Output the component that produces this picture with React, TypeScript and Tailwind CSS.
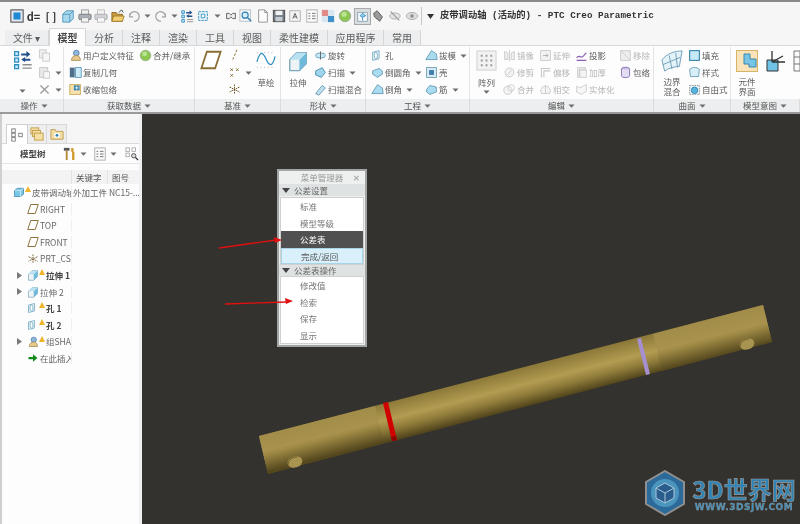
import React from "react";

const cjk = "font-['Noto_Sans_CJK_SC','Noto_Sans',sans-serif]";

const tabs = [
  { label: "文件 ▾", w: "w-[44px]" },
  { label: "模型", w: "w-[37px]", active: true },
  { label: "分析", w: "w-[37px]" },
  { label: "注释", w: "w-[37px]" },
  { label: "渲染", w: "w-[37px]" },
  { label: "工具", w: "w-[37px]" },
  { label: "视图", w: "w-[37px]" },
  { label: "柔性建模", w: "w-[57px]" },
  { label: "应用程序", w: "w-[56px]" },
  { label: "常用", w: "w-[37px]" },
];

const footers = [
  { label: "操作", w: "w-[59px]" },
  { label: "获取数据", w: "w-[131px]" },
  { label: "基准", w: "w-[86px]" },
  { label: "形状", w: "w-[85px]" },
  { label: "工程", w: "w-[104px]" },
  { label: "编辑", w: "w-[184px]" },
  { label: "曲面", w: "w-[77px]" },
  { label: "模型意图", w: "flex-1" },
];

function Caret({ className = "" }: { className?: string }) {
  return (
    <svg width="7" height="4" viewBox="0 0 7 4" className={`shrink-0 ${className}`}>
      <path d="M0.5 0.5h6L3.5 3.8z" fill="#6d6d6d" />
    </svg>
  );
}

// one generic drawing per kind of small icon in the toolbar and ribbon
function Icon({ kind, size = 15 }: { kind: string; size?: number }) {
  const draw: Record<string, React.ReactNode> = {
    window: (
      <>
        <rect x="1" y="1" width="14" height="14" fill="#dfe8f0" stroke="#333" />
        <rect x="4" y="4" width="8" height="8" fill="#1e88d2" />
      </>
    ),
    cube: (
      <>
        <path d="M2 6l4-4h8v9l-4 4H2z" fill="#a8d8ec" stroke="#4d93b8" />
        <path d="M2 6h8v9M10 6l4-4" fill="none" stroke="#4d93b8" />
      </>
    ),
    printer: (
      <>
        <rect x="4" y="1" width="8" height="6" fill="#eee" stroke="#999" />
        <rect x="1" y="6" width="14" height="6" rx="1" fill="#a9b0b8" stroke="#777" />
        <rect x="4" y="10" width="8" height="5" fill="#f3f3f3" stroke="#999" />
      </>
    ),
    printerOff: (
      <>
        <rect x="4" y="1" width="8" height="6" fill="#f3f3f3" stroke="#bbb" />
        <rect x="1" y="6" width="14" height="6" rx="1" fill="#cfd2d6" stroke="#aaa" />
        <rect x="4" y="10" width="8" height="5" fill="#f8f8f8" stroke="#bbb" />
      </>
    ),
    folder: (
      <>
        <path d="M1 4h5l1 2h6v8H1z" fill="#c89a3c" stroke="#8a6a22" />
        <path d="M3 8h12l-2 6H1z" fill="#f2cf74" stroke="#a07c2c" />
        <path d="M9 4l3-3 2 3" fill="none" stroke="#333" />
      </>
    ),
    undo: <path d="M3 9a5.5 5.5 0 1 1 5 5M3 5v4h4" fill="none" stroke="#a3a3a3" strokeWidth="1.4" />,
    redo: <path d="M13 9a5.5 5.5 0 1 0-5 5M13 5v4H9" fill="none" stroke="#a3a3a3" strokeWidth="1.4" />,
    regen: (
      <>
        <path d="M2 2h3v3H2zM2 7h3v3H2zM2 12h3v3H2z" fill="#c8e8f6" stroke="#2f8fc0" />
        <path d="M7 3.5h4V1.5l3 2.5-3 2.5V5H7zM14 7.5h-4V6L7 8l3 2V9h4z" fill="#24508a" />
        <path d="M8 12h7M8 14.5h7" stroke="#8c8c8c" />
      </>
    ),
    select: (
      <>
        <path d="M3 3h10v10H3z" fill="#e6f4fa" stroke="#2f8fc0" strokeDasharray="3 1" />
        <path d="M6 6h4v4H6z" fill="#fff" stroke="#2f8fc0" />
      </>
    ),
    xx: <path d="M3 5h3l2 2 2-2h3v6h-3l-2-2-2 2H3z" fill="#eee" stroke="#555" />,
    zoom: (
      <>
        <rect x="1" y="1" width="12" height="13" fill="#f4f8fb" stroke="#b5bcc2" />
        <circle cx="7" cy="7" r="3.5" fill="#d6eefa" stroke="#2f7fb0" strokeWidth="1.3" />
        <path d="M10 10l4 4" stroke="#2f7fb0" strokeWidth="1.6" />
      </>
    ),
    page: <path d="M3 1h7l3 3v11H3zM10 1v3h3" fill="#fbfbfb" stroke="#8d8d8d" />,
    save: (
      <>
        <rect x="1.5" y="1.5" width="13" height="13" fill="#6f7a84" stroke="#444" />
        <rect x="4" y="2" width="8" height="5" fill="#f1f1f1" />
        <rect x="4" y="9" width="8" height="5" fill="#c4ccd2" />
      </>
    ),
    note: (
      <>
        <rect x="2" y="2" width="12" height="12" fill="#f3f3f3" stroke="#aaa" />
        <path d="M5.5 11L8 5l2.5 6M6.5 9h3" fill="none" stroke="#555" />
      </>
    ),
    list: (
      <>
        <rect x="2" y="1" width="12" height="14" fill="#fafafa" stroke="#aaa" />
        <path d="M4 5h2M8 5h4M4 8h2M8 8h4M4 11h2M8 11h4" stroke="#666" />
      </>
    ),
    color: (
      <>
        <rect x="1" y="1" width="7" height="7" fill="#e08a8a" />
        <rect x="8" y="1" width="7" height="7" fill="#d9e6ef" />
        <rect x="1" y="8" width="7" height="7" fill="#d9e6ef" />
        <rect x="8" y="8" width="7" height="7" fill="#3f8fc9" />
      </>
    ),
    ball: (
      <>
        <circle cx="8" cy="8" r="6.5" fill="#8cc850" stroke="#9aa690" />
        <circle cx="7" cy="6" r="3" fill="#b9e490" />
      </>
    ),
    view: (
      <>
        <path d="M2 3h12v11H2z" fill="#f2f9fd" stroke="#8b9aa5" />
        <path d="M8 4l4 3-4 2-3-2zM8 9v4" fill="#8fd0ec" stroke="#2f7fb0" />
      </>
    ),
    tool: <path d="M3 5l4-3 6 7-3 5-6-5z" fill="#9a9a9a" stroke="#555" />,
    eyeOff: (
      <>
        <ellipse cx="8" cy="8" rx="6" ry="3.5" fill="#e6e6e6" stroke="#aaa" />
        <path d="M3 3l10 10" stroke="#999" strokeWidth="1.4" />
      </>
    ),
    eye: (
      <>
        <ellipse cx="8" cy="8" rx="6.5" ry="4" fill="#dedede" stroke="#aaa" />
        <circle cx="8" cy="8" r="2" fill="#8a8a8a" />
      </>
    ),
    copy: (
      <>
        <rect x="2" y="1" width="8" height="10" fill="#eee" stroke="#c4c4c4" />
        <rect x="6" y="5" width="8" height="10" fill="#f6f6f6" stroke="#c4c4c4" />
      </>
    ),
    paste: (
      <>
        <rect x="2" y="2" width="10" height="12" fill="#e8e8e8" stroke="#c4c4c4" />
        <rect x="7" y="7" width="7" height="8" fill="#f8f8f8" stroke="#c4c4c4" />
      </>
    ),
    cross: <path d="M3 3l10 10M13 3L3 13" stroke="#9a9a9a" strokeWidth="1.6" />,
    udf: (
      <>
        <circle cx="9" cy="5" r="3.5" fill="#8fb9e0" stroke="#4b78a8" />
        <path d="M3 14c0-4 3-6 6-6s5 2 5 6z" fill="#e6c98c" stroke="#a88a4c" />
      </>
    ),
    geom: (
      <>
        <rect x="1" y="2" width="6" height="12" fill="#4f6f8a" />
        <rect x="8" y="2" width="7" height="12" fill="#cdeaf6" stroke="#4d93b8" />
      </>
    ),
    wrap: (
      <>
        <rect x="1" y="2" width="13" height="12" fill="#f7e2ae" stroke="#c7a24c" />
        <rect x="6" y="3" width="7" height="6" fill="#2f7fb0" />
        <path d="M7 6h5M9.5 4v4" stroke="#fff" />
      </>
    ),
    plane: <path d="M5 2h10l-4 12H1z" fill="#fff" stroke="#8a6f35" strokeWidth="1.3" />,
    axis: <path d="M11 1L5 15" stroke="#8a6f35" strokeWidth="1.2" strokeDasharray="3 2" />,
    points: <path d="M3 3l3 3M6 3l-3 3M10 3l3 3M13 3l-3 3M3 10l3 3M6 10l-3 3" stroke="#8a6f35" strokeWidth="1.2" />,
    csys: <path d="M8 2v12M2 5l12 6M14 5L2 11" stroke="#6b5220" strokeWidth="1.2" strokeDasharray="2 1" />,
    revolve: (
      <>
        <ellipse cx="8" cy="8" rx="6" ry="3" fill="#c9e8f5" stroke="#4d93b8" />
        <path d="M8 3v10" stroke="#555" />
      </>
    ),
    sweep: <path d="M2 6l8-4 4 6-5 6-7-3z" fill="#9fd4ea" stroke="#3b86ab" />,
    blend: <path d="M2 13L10 3l4 3-8 9z" fill="#bfdfee" stroke="#5b93ad" />,
    hole: (
      <>
        <path d="M2 4l8-2v10l-8 2z" fill="#e8f5fa" stroke="#6ba3be" />
        <ellipse cx="6" cy="8" rx="2" ry="4" fill="#fff" stroke="#6ba3be" />
      </>
    ),
    round: <path d="M2 6l8-3 4 3v4l-6 4-6-4z" fill="#a9dcf0" stroke="#5b93ad" />,
    draft: <path d="M1 13L8 2l6 4 1 7z" fill="#a9dcf0" stroke="#5b93ad" />,
    shell: (
      <>
        <rect x="2" y="2" width="12" height="12" fill="#dcecf5" stroke="#5b93ad" />
        <rect x="5" y="5" width="6" height="6" fill="#3f7fae" />
      </>
    ),
    rib: <path d="M2 8l4-5 8 2v6l-8 3-4-3z" fill="#a9dcf0" stroke="#5b93ad" />,
    mirror: <path d="M8 1v14M2 3l4 2v8H2zM14 3l-4 2v8h4z" fill="#eee" stroke="#c6c6c6" />,
    extend: (
      <>
        <rect x="2" y="2" width="12" height="12" fill="#f2f2f2" stroke="#c6c6c6" />
        <path d="M5 8h6M9 6l2 2-2 2" fill="none" stroke="#a5a5a5" />
      </>
    ),
    project: <path d="M2 11c3-5 5 1 8-2s3-4 4-4M2 14h12" fill="none" stroke="#8d5fb5" strokeWidth="1.4" />,
    remove: <path d="M2 2h12v12H2zM2 2l12 12" fill="#ededed" stroke="#c6c6c6" />,
    trim: (
      <>
        <circle cx="8" cy="8" r="5.5" fill="#f2f2f2" stroke="#c6c6c6" />
        <path d="M3 13L13 3" stroke="#c6c6c6" />
      </>
    ),
    offset: <path d="M3 14V3h11M6 14V6h8" fill="none" stroke="#c6c6c6" strokeWidth="1.3" />,
    thicken: <path d="M3 2h10v2H5v10H3zM6 5h8v9H6z" fill="#f4f4f4" stroke="#c6c6c6" />,
    wrapcyl: (
      <>
        <ellipse cx="8" cy="4" rx="5" ry="2.5" fill="#c4b4e0" stroke="#7a62a8" />
        <path d="M3 4v8c0 3 10 3 10 0V4" fill="#e4dcf2" stroke="#7a62a8" />
      </>
    ),
    merge: (
      <>
        <circle cx="6" cy="9" r="5" fill="#f4f4f4" stroke="#c6c6c6" />
        <circle cx="10" cy="6" r="4" fill="none" stroke="#c6c6c6" />
      </>
    ),
    intersect: <path d="M3 13a6 6 0 1 1 10 0zM8 3v10" fill="#f4f4f4" stroke="#c6c6c6" />,
    solidify: <path d="M2 4l4 2 8-4v8l-6 4-6-3z" fill="#f7f7f7" stroke="#c6c6c6" />,
    fill: <rect x="2" y="2" width="12" height="12" fill="#c6e9f7" stroke="#3b86ab" strokeWidth="1.4" />,
    style: <path d="M2 4c4-3 8-3 12 0l-1 9H3z" fill="#d8eef8" stroke="#5b93ad" />,
    free: (
      <>
        <rect x="2" y="3" width="12" height="11" fill="#eaf6fb" stroke="#888" strokeDasharray="2 1" />
        <circle cx="8" cy="9" r="4" fill="#58b4dc" stroke="#2f7fb0" />
      </>
    ),
    hammer: (
      <>
        <path d="M2 2h6v3H2z" fill="#555" />
        <path d="M4 5h2v10H4z" fill="#b98a3c" />
        <path d="M11 2v4M12 6v9" stroke="#d29a2c" strokeWidth="2.5" />
      </>
    ),
    tree: (
      <>
        <rect x="2" y="1" width="4" height="4" fill="#fff" stroke="#777" />
        <rect x="2" y="6" width="4" height="4" fill="#fff" stroke="#777" />
        <rect x="2" y="11" width="4" height="4" fill="#fff" stroke="#777" />
        <rect x="10" y="6" width="4" height="4" fill="#fff" stroke="#777" />
      </>
    ),
    treeFind: (
      <>
        <rect x="1" y="1" width="4" height="4" fill="#fff" stroke="#aaa" />
        <rect x="8" y="1" width="4" height="4" fill="#fff" stroke="#aaa" />
        <rect x="1" y="7" width="4" height="4" fill="#fff" stroke="#aaa" />
        <circle cx="10" cy="10" r="2.5" fill="#ddd" stroke="#444" />
        <path d="M12 12l3 3" stroke="#333" strokeWidth="1.5" />
      </>
    ),
    layers: (
      <>
        <rect x="1" y="1" width="9" height="7" fill="#f5dfa4" stroke="#c09a44" />
        <rect x="3" y="4" width="9" height="7" fill="#f5dfa4" stroke="#c09a44" />
        <rect x="5" y="7" width="10" height="8" fill="#f5dfa4" stroke="#c09a44" />
      </>
    ),
    folderTab: (
      <>
        <path d="M1 3h5l1 2h8v9H1z" fill="#f1dca2" stroke="#bc9a4c" />
        <rect x="5" y="7" width="6" height="5" fill="#fff" />
        <circle cx="8" cy="9.5" r="1.6" fill="#2f7fb0" />
      </>
    ),
    part: (
      <>
        <path d="M2 6l4-3h8v8l-4 3H2z" fill="#7cc7e8" stroke="#3b86ab" />
        <path d="M2 6h8v8M10 6l4-3" fill="none" stroke="#d8f0fa" />
      </>
    ),
    extrude: (
      <>
        <path d="M2 7l5-5h7v8l-5 5H2z" fill="#eef3f5" stroke="#7ea9bc" />
        <path d="M9 7l5-5v8l-5 5z" fill="#6fb9da" />
        <path d="M2 7l5-5h7l-5 5z" fill="#b9e1f1" />
      </>
    ),
    insert: <path d="M2 6.5h6V3l6 5-6 5V9.5H2z" fill="#128a1e" />,
  };
  return (
    <svg width={size} height={size} viewBox="0 0 16 16" className="shrink-0">
      {draw[kind]}
    </svg>
  );
}

const toolbar = [
  { kind: "window", w: "w-[16px]" }, { kind: "text:d=", w: "w-[17px]" }, { kind: "text:[ ]", w: "w-[18px]" },
  { kind: "cube", w: "w-[16px]" }, { kind: "printer", w: "w-[17px]" }, { kind: "printerOff", w: "w-[16px]" },
  { kind: "folder", w: "w-[17px]" }, { kind: "undo", w: "w-[16px]" }, { kind: "caret", w: "w-[10px]" },
  { kind: "redo", w: "w-[17px]" }, { kind: "caret", w: "w-[10px]" }, { kind: "regen", w: "w-[16px]" },
  { kind: "select", w: "w-[16px]" }, { kind: "caret", w: "w-[12px]" }, { kind: "xx", w: "w-[15px]" },
  { kind: "zoom", w: "w-[16px]" }, { kind: "page", w: "w-[17px]" }, { kind: "save", w: "w-[16px]" },
  { kind: "note", w: "w-[16px]" }, { kind: "list", w: "w-[17px]" }, { kind: "color", w: "w-[15px]" },
  { kind: "ball", w: "w-[20px]" }, { kind: "view", w: "w-[14px]" }, { kind: "tool", w: "w-[17px]" },
  { kind: "eyeOff", w: "w-[17px]" }, { kind: "eye", w: "w-[17px]" },
];

function RibbonItem({
  icon,
  label,
  off,
  caret,
}: {
  icon: string;
  label?: string;
  off?: boolean;
  caret?: boolean;
}) {
  return (
    <div className="flex h-[17px] items-center gap-[1px]">
      <Icon kind={icon} size={13} />
      {label && (
        <span className={`whitespace-nowrap text-[8.5px] leading-none ${off ? "text-[#b6b6b6]" : "text-[#5c5c5c]"}`}>
          {label}
        </span>
      )}
      {caret && <Caret className="ml-[3px]" />}
    </div>
  );
}

function Stack({ children, w, ml = "" }: { children: React.ReactNode; w: string; ml?: string }) {
  return <div className={`flex shrink-0 flex-col justify-start ${w} ${ml}`}>{children}</div>;
}

function Ribbon() {
  return (
    <div className="flex h-[53px] shrink-0 bg-[#fdfdfd] pt-[1px]">
      {/* 操作 */}
      <div className="flex w-[64px] shrink-0 border-r border-[#e2e4e6] pl-[12px]">
        <div className="flex w-[26px] flex-col">
          <div className="mt-[2px]">
            <Icon kind="regen" size={21} />
          </div>
          <Caret className="ml-[7px] mt-[19px]" />
        </div>
        <Stack w="w-[24px]">
          <RibbonItem icon="copy" />
          <RibbonItem icon="paste" caret />
          <RibbonItem icon="cross" caret />
        </Stack>
      </div>
      {/* 获取数据 */}
      <div className="flex w-[131px] shrink-0 border-r border-[#e2e4e6] pl-[5px]">
        <Stack w="w-[125px]">
          <div className="flex gap-[5px]">
            <RibbonItem icon="udf" label="用户定义特征" />
            <RibbonItem icon="ball" label="合并/继承" />
          </div>
          <RibbonItem icon="geom" label="复制几何" />
          <RibbonItem icon="wrap" label="收缩包络" />
        </Stack>
      </div>
      {/* 基准 */}
      <div className="flex w-[86px] shrink-0 border-r border-[#e2e4e6] pl-[5px]">
        <div className="mt-[2px] w-[28px] shrink-0">
          <Icon kind="plane" size={22} />
        </div>
        <Stack w="w-[28px]">
          <RibbonItem icon="axis" />
          <RibbonItem icon="points" caret />
          <RibbonItem icon="csys" />
        </Stack>
        <div className="flex w-[20px] shrink-0 flex-col items-center">
          <svg width="20" height="20" viewBox="0 0 22 20" className="mt-[3px] shrink-0">
            <path d="M1 12c4-14 7-10 10-3s7 10 10-3" fill="none" stroke="#2f8fc0" strokeWidth="1.4" />
            <path d="M1 2h20M1 18h20" stroke="#aaa" strokeDasharray="1 3" />
          </svg>
          <span className="mt-[8px] whitespace-nowrap text-[8.5px] leading-none text-[#5c5c5c]">草绘</span>
        </div>
      </div>
      {/* 形状 */}
      <div className="flex w-[85px] shrink-0 border-r border-[#e2e4e6] pl-[6px]">
        <div className="flex w-[22px] shrink-0 flex-col items-center">
          <div className="mt-[3px]">
            <Icon kind="extrude" size={22} />
          </div>
          <span className="mt-[6px] whitespace-nowrap text-[8.5px] leading-none text-[#5c5c5c]">拉伸</span>
        </div>
        <Stack w="w-[50px]" ml="ml-[5px]">
          <RibbonItem icon="revolve" label="旋转" />
          <RibbonItem icon="sweep" label="扫描" caret />
          <RibbonItem icon="blend" label="扫描混合" />
        </Stack>
      </div>
      {/* 工程 */}
      <div className="flex w-[104px] shrink-0 border-r border-[#e2e4e6] pl-[5px]">
        <Stack w="w-[54px]">
          <RibbonItem icon="hole" label="孔" />
          <RibbonItem icon="round" label="倒圆角" caret />
          <RibbonItem icon="draft" label="倒角" caret />
        </Stack>
        <Stack w="w-[44px]">
          <RibbonItem icon="draft" label="拔模" caret />
          <RibbonItem icon="shell" label="壳" />
          <RibbonItem icon="rib" label="筋" caret />
        </Stack>
      </div>
      {/* 编辑 */}
      <div className="flex w-[184px] shrink-0 border-r border-[#e2e4e6] pl-[6px]">
        <div className="flex w-[21px] shrink-0 flex-col items-center">
          <svg width="21" height="21" viewBox="0 0 22 22" className="mt-[3px] shrink-0">
            <rect x="1" y="1" width="20" height="20" fill="#f2f2f2" stroke="#cfcfcf" />
            <path d="M5 6h2M10 6h2M15 6h2M5 11h2M10 11h2M15 11h2M5 16h2M10 16h2M15 16h2" stroke="#9a9a9a" strokeWidth="2" />
          </svg>
          <span className="mt-[7px] whitespace-nowrap text-[8.5px] leading-none text-[#5c5c5c]">阵列</span>
          <Caret className="mt-[3px]" />
        </div>
        <Stack w="w-[36px]" ml="ml-[6px]">
          <RibbonItem icon="mirror" label="镜像" off />
          <RibbonItem icon="trim" label="修剪" off />
          <RibbonItem icon="merge" label="合并" off />
        </Stack>
        <Stack w="w-[36px]">
          <RibbonItem icon="extend" label="延伸" off />
          <RibbonItem icon="offset" label="偏移" off />
          <RibbonItem icon="intersect" label="相交" off />
        </Stack>
        <Stack w="w-[44px]">
          <RibbonItem icon="project" label="投影" />
          <RibbonItem icon="thicken" label="加厚" off />
          <RibbonItem icon="solidify" label="实体化" off />
        </Stack>
        <Stack w="w-[30px]">
          <RibbonItem icon="remove" label="移除" off />
          <RibbonItem icon="wrapcyl" label="包络" />
        </Stack>
      </div>
      {/* 曲面 */}
      <div className="flex w-[77px] shrink-0 border-r border-[#e2e4e6] pl-[6px]">
        <div className="flex w-[24px] shrink-0 flex-col items-center">
          <svg width="22" height="24" viewBox="0 0 24 24" className="mt-[2px] shrink-0">
            <path d="M1 11C6 4 15 1 23 1l-3 17c-6 0-12 2-16 5z" fill="#e4f3fa" stroke="#6b9db5" />
            <path d="M9 6l3 15M16 3l2 16M2 16l19-8" stroke="#6b9db5" fill="none" />
          </svg>
          <span className="mt-[3px] w-[18px] text-center text-[8.5px] leading-[10px] text-[#5c5c5c]">边界混合</span>
        </div>
        <Stack w="w-[42px]" ml="ml-[4px]">
          <RibbonItem icon="fill" label="填充" />
          <RibbonItem icon="style" label="样式" />
          <RibbonItem icon="free" label="自由式" />
        </Stack>
      </div>
      {/* 模型意图 */}
      <div className="flex flex-1 overflow-hidden pl-[5px]">
        <div className="flex w-[22px] shrink-0 flex-col items-center">
          <svg width="22" height="22" viewBox="0 0 22 22" className="mt-[3px] shrink-0">
            <rect x="0.5" y="0.5" width="21" height="21" fill="#f8e4b8" stroke="#d8b468" />
            <path d="M8 4h6v5h6v8h-7v-3H8z" fill="#76c5e6" stroke="#3b86ab" />
          </svg>
          <span className="mt-[4px] w-[18px] text-center text-[8.5px] leading-[10px] text-[#5c5c5c]">元件界面</span>
        </div>
        <svg width="22" height="24" viewBox="0 0 22 24" className="ml-[6px] mt-[2px] shrink-0">
          <path d="M3 11h11v11H3z" fill="#6fc1e6" stroke="#333" />
          <path d="M8 13V2M8 13l11-6M8 13h13" stroke="#333" strokeWidth="1.3" />
        </svg>
        <svg width="14" height="22" viewBox="0 0 14 22" className="ml-[7px] mt-[3px] shrink-0">
          <path d="M1 1h20v20H1zM1 7h20M1 14h20M7 1v20" fill="#fafafa" stroke="#777" />
        </svg>
      </div>
    </div>
  );
}

const treeRows = [
  { icon: "part", label: "皮带调动轴", warn: true, indent: "pl-[11px]" },
  { icon: "plane", label: "RIGHT", indent: "pl-[25px]" },
  { icon: "plane", label: "TOP", indent: "pl-[25px]" },
  { icon: "plane", label: "FRONT", indent: "pl-[25px]" },
  { icon: "csys", label: "PRT_CSYS", indent: "pl-[25px]" },
  { icon: "extrude", label: "拉伸 1", warn: true, bold: true, arrow: true, indent: "pl-[15px]" },
  { icon: "extrude", label: "拉伸 2", arrow: true, indent: "pl-[15px]" },
  { icon: "hole", label: "孔 1", warn: true, bold: true, indent: "pl-[25px]" },
  { icon: "hole", label: "孔 2", warn: true, bold: true, indent: "pl-[25px]" },
  { icon: "udf", label: "组SHAFT", warn: true, arrow: true, indent: "pl-[15px]" },
  { icon: "insert", label: "在此插入", indent: "pl-[25px]" },
];

function Warn() {
  return (
    <svg width="6" height="6" viewBox="0 0 6 6" className="mb-[6px] shrink-0">
      <path d="M3 0l3 6H0z" fill="#f0b429" />
    </svg>
  );
}

function Sidebar() {
  return (
    <aside className="flex w-[142px] shrink-0 flex-col border-l-2 border-r-[3px] border-l-[#cfcfcf] border-r-[#f0f0f0] bg-[#fdfdfd]">
      <div className="flex h-[30px] items-end border-b border-[#dadada] bg-[#f6f6f6] pl-[4px]">
        <div className="-mb-px flex h-[20px] w-[22px] items-center justify-center border border-b-0 border-[#d0d0d0] bg-white">
          <Icon kind="tree" size={14} />
        </div>
        <div className="flex h-[19px] w-[18px] items-center justify-center border-t border-[#d8d8d8] bg-[#eeeeee]">
          <Icon kind="layers" size={14} />
        </div>
        <div className="flex h-[19px] w-[21px] items-center justify-center border border-b-0 border-[#d8d8d8] bg-[#eeeeee]">
          <Icon kind="folderTab" size={14} />
        </div>
      </div>
      <div className="flex h-[20px] items-center border-b border-[#e6e6e6] pl-[18px]">
        <span className="w-[42px] shrink-0 text-[8.5px] font-bold text-[#444]">模型树</span>
        <Icon kind="hammer" size={15} />
        <Caret className="ml-[3px]" />
        <div className="ml-[6px]">
          <Icon kind="list" size={14} />
        </div>
        <Caret className="ml-[3px]" />
        <div className="ml-[8px]">
          <Icon kind="treeFind" size={14} />
        </div>
      </div>
      <div className="mt-[6px] flex h-[14px] shrink-0 bg-[#f3f3f3] pl-[9px] text-[8.5px] leading-[14px] text-[#555]">
        <div className="w-[61px] shrink-0 border-r border-[#e2e2e2]" />
        <div className="w-[36px] shrink-0 border-r border-[#e2e2e2] pl-[4px]">关键字</div>
        <div className="pl-[4px]">图号</div>
      </div>
      <div className="flex flex-1 flex-col overflow-hidden">
        {treeRows.map((row, i) => (
          <div key={row.label} className="flex h-[16.6px] shrink-0 items-center text-[8.5px] leading-none text-[#666]">
            <div className={`flex w-[70px] shrink-0 items-center overflow-hidden whitespace-nowrap border-r border-[#efefef] ${row.indent}`}>
              {row.arrow && (
                <svg width="5" height="7" viewBox="0 0 5 7" className="mr-[5px] shrink-0">
                  <path d="M0 0l5 3.5L0 7z" fill="#7a7a7a" />
                </svg>
              )}
              <Icon kind={row.icon} size={12} />
              {row.warn && <Warn />}
              <span className={`ml-[1px] ${row.bold ? "font-bold text-[#444]" : ""}`}>{row.label}</span>
            </div>
            {i === 0 && <div className="whitespace-nowrap pl-[1px]">外加工件 NC15-...</div>}
          </div>
        ))}
      </div>
    </aside>
  );
}

function MenuSection({ label, h }: { label: string; h: string }) {
  return (
    <div className={`flex items-center gap-[4px] bg-[#dfe2e2] pl-[3px] text-[8.5px] leading-none text-[#666] ${h}`}>
      <svg width="8" height="5" viewBox="0 0 8 5">
        <path d="M0 0h8L4 5z" fill="#444" />
      </svg>
      {label}
    </div>
  );
}

function MenuRow({ label, tone }: { label: string; tone?: "dark" | "done" }) {
  const style =
    tone === "dark"
      ? "bg-[#505050] text-white"
      : tone === "done"
        ? "border border-[#a8d4ea] bg-[#d9f0fb] text-[#555]"
        : "text-[#777]";
  return (
    <div className={`flex h-[16.5px] items-center pl-[19px] text-[8.5px] leading-none ${style}`}>{label}</div>
  );
}

function MenuManager() {
  return (
    <div className={`absolute left-[135px] top-[55px] w-[90px] border-2 border-[#a3a5a5] bg-[#eeefef] ${cjk}`}>
      <div className="relative flex h-[13px] items-center justify-center text-[8.5px] leading-none text-[#999]">
        菜单管理器
        <span className="absolute right-[5px] text-[8px] font-bold text-[#aaa]">✕</span>
      </div>
      <MenuSection label="公差设置" h="h-[12px]" />
      <div className="mx-px mt-px border border-[#d0d0d0] bg-white">
        <MenuRow label="标准" />
        <MenuRow label="模型等级" />
        <MenuRow label="公差表" tone="dark" />
        <MenuRow label="完成/返回" tone="done" />
      </div>
      <MenuSection label="公差表操作" h="h-[11px]" />
      <div className="mx-px mb-px border border-[#d0d0d0] bg-white">
        <MenuRow label="修改值" />
        <MenuRow label="检索" />
        <MenuRow label="保存" />
        <MenuRow label="显示" />
      </div>
    </div>
  );
}

// the shaft, in page coordinates so the numbers read off the reference directly
function Shaft() {
  return (
    <svg viewBox="142 114 658 410" className="absolute inset-0 h-full w-full">
      <defs>
        <linearGradient id="midBody" gradientUnits="userSpaceOnUse" x1="500" y1="373" x2="509.5" y2="410">
          <stop offset="0" stopColor="#8b7838" />
          <stop offset="0.2" stopColor="#9c8843" />
          <stop offset="0.45" stopColor="#b39c52" />
          <stop offset="0.7" stopColor="#917d3b" />
          <stop offset="1" stopColor="#54471d" />
        </linearGradient>
        <linearGradient id="endBody" gradientUnits="userSpaceOnUse" x1="500" y1="373" x2="509.5" y2="410">
          <stop offset="0" stopColor="#a18c49" />
          <stop offset="0.45" stopColor="#a8924d" />
          <stop offset="0.55" stopColor="#9d8844" />
          <stop offset="1" stopColor="#54471d" />
        </linearGradient>
      </defs>
      <polygon points="259,436 763,305 772,342 268,474" fill="url(#midBody)" />
      <polygon points="259,436 375,406 384,443 268,474" fill="url(#endBody)" />
      <polygon points="653,334 763,305 772,342 662,371" fill="url(#endBody)" />
      <polygon points="383,403 388,402 397,440 392,441" fill="#d00000" />
      <polygon points="392,441 397,440 396,436 391,437" fill="#8e0505" />
      <polygon points="637,339 641,338 650,374 646,375" fill="#a58fce" />
      <ellipse cx="295" cy="462" rx="7.5" ry="5.5" fill="#a89350" transform="rotate(-15 295 462)" />
      <path d="M288 465c0-6 6-8 9-8" fill="none" stroke="#6d5d28" />
      <ellipse cx="747" cy="344" rx="7.5" ry="5.5" fill="#a89350" transform="rotate(-15 747 344)" />
      <path d="M740 347c0-6 6-8 9-8" fill="none" stroke="#6d5d28" />
    </svg>
  );
}

function Arrows() {
  return (
    <svg viewBox="142 114 658 410" className="pointer-events-none absolute inset-0 h-full w-full">
      <path d="M219 248L276 240" stroke="#e01010" strokeWidth="1.3" />
      <path d="M282 240l-8-3 1 6z" fill="#e01010" />
      <path d="M225 304L286 302" stroke="#e01010" strokeWidth="1.3" />
      <path d="M293 301l-8-3 1 6z" fill="#e01010" />
    </svg>
  );
}

function Watermark() {
  return (
    <div className="absolute bottom-[8px] right-[4px] flex items-start gap-[6px]">
      <svg width="42" height="46" viewBox="0 0 42 46" className="shrink-0">
        <path d="M21 1l19 11v22L21 45 2 34V12z" fill="#2c6a9a" stroke="#8f8f8f" strokeWidth="2" />
        <circle cx="21" cy="23" r="14" fill="#4a94bd" />
        <path d="M21 13l9 5v10l-9 5-9-5V18z" fill="#2a5c8e" stroke="#a9c8d8" />
        <path d="M12 18l9 5 9-5M21 23v10" fill="none" stroke="#a9c8d8" />
      </svg>
      <div className="mt-[6px] flex w-[104px] flex-col items-center">
        <span className={`h-[26px] overflow-hidden whitespace-nowrap text-[24px] font-bold leading-[26px] text-[#2f84b5] [-webkit-text-stroke:0.7px_#9a9a9a] ${cjk}`}>
          3D世界网
        </span>
        <span className="whitespace-nowrap font-['DejaVu_Sans',sans-serif] text-[9px] font-bold leading-[10px] tracking-[0.5px] text-[#3f8fbd] [-webkit-text-stroke:0.3px_#9a9a9a]">
          WWW.3DSJW.COM
        </span>
      </div>
    </div>
  );
}

export default function App() {
  return (
    <div className={`flex h-[524px] w-[800px] flex-col overflow-hidden bg-[#f6f6f6] blur-[0.4px] ${cjk}`}>
      {/* title bar */}
      <div className="flex h-[30px] shrink-0 items-center border-t-2 border-[#8a8a8a] pl-[9px]">
        {toolbar.map((item, i) => (
          <div key={i} className={`flex shrink-0 items-center justify-center ${item.w}`}>
            {item.kind === "caret" ? (
              <Caret />
            ) : item.kind.startsWith("text:") ? (
              <span className="whitespace-nowrap text-[11px] font-bold leading-none text-[#333]">{item.kind.slice(5)}</span>
            ) : item.kind === "view" ? (
              <div className="border border-[#a8a8a8] bg-[#d8dde0] p-px">
                <Icon kind={item.kind} size={13} />
              </div>
            ) : (
              <Icon kind={item.kind} size={14} />
            )}
          </div>
        ))}
        <div className="ml-px h-[18px] w-px bg-[#c8c8c8]" />
        <svg width="7" height="5" viewBox="0 0 7 5" className="ml-[5px]">
          <path d="M0 0h7L3.5 5z" fill="#333" />
        </svg>
        <span className="ml-[6px] whitespace-nowrap font-['Liberation_Mono','Noto_Sans_CJK_SC',monospace] text-[9.3px] font-bold leading-none text-[#333]">
          皮带调动轴 (活动的) - PTC Creo Parametric
        </span>
      </div>
      {/* tabs */}
      <div className="flex h-[16px] shrink-0 items-end border-b border-[#d8d8d8] pl-[5px]">
        {tabs.map((tab) => (
          <div
            key={tab.label}
            className={`flex h-[15px] shrink-0 items-center justify-center border-r border-[#d6d6d6] text-[10px] leading-none ${tab.w} ${
              tab.active
                ? "-mb-px h-[18px] border-x border-t border-[#cfcfcf] bg-[#fdfdfd] font-bold text-[#444]"
                : "bg-[#eceeef] text-[#5c5c5c]"
            }`}
          >
            {tab.label}
          </div>
        ))}
      </div>
      <Ribbon />
      {/* group labels */}
      <div className="flex h-[15px] shrink-0 border-b-2 border-[#9a9a9a] bg-[#eceeef] pl-[5px]">
        {footers.map((group) => (
          <div
            key={group.label}
            className={`flex shrink-0 items-center justify-center gap-[3px] border-r border-[#dcdcdc] text-[8.5px] leading-none text-[#555] ${group.w}`}
          >
            {group.label}
            <Caret />
          </div>
        ))}
      </div>
      <div className="flex min-h-0 flex-1">
        <Sidebar />
        <main className="relative flex-1 bg-[#33322e]">
          <Shaft />
          <MenuManager />
          <Arrows />
          <Watermark />
        </main>
      </div>
    </div>
  );
}
